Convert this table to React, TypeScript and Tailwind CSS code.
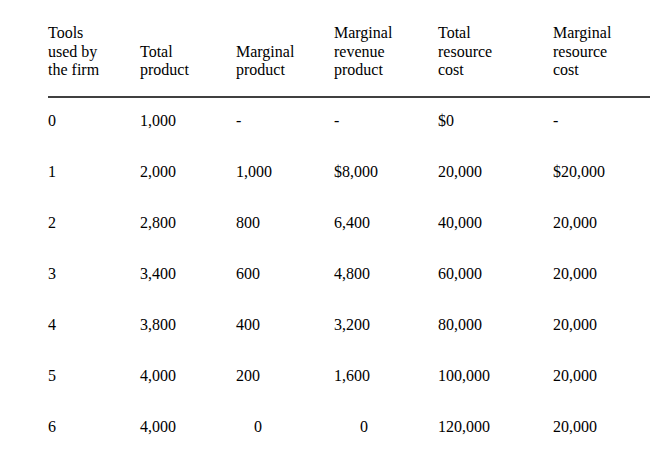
import React from "react";

const headers = [
  ["Tools", "used by", "the firm"],
  ["Total", "product"],
  ["Marginal", "product"],
  ["Marginal", "revenue", "product"],
  ["Total", "resource", "cost"],
  ["Marginal", "resource", "cost"],
];

const rows = [
  ["0", "1,000", "-", "-", "$0", "-"],
  ["1", "2,000", "1,000", "$8,000", "20,000", "$20,000"],
  ["2", "2,800", "800", "6,400", "40,000", "20,000"],
  ["3", "3,400", "600", "4,800", "60,000", "20,000"],
  ["4", "3,800", "400", "3,200", "80,000", "20,000"],
  ["5", "4,000", "200", "1,600", "100,000", "20,000"],
  ["6", "4,000", "0", "0", "120,000", "20,000"],
];

const grid = "grid grid-cols-[92px_96px_98px_104px_115px_1fr]";

export default function App() {
  return (
    <div className="w-[650px] h-[464px] bg-white text-black font-['Liberation_Serif',serif] text-[16px] overflow-hidden">
      <div className="pl-[48px] pt-[24px]">
        {/* Header */}
        <div className={`${grid} items-end leading-[18.5px] pb-[16px]`}>
          {headers.map((lines, i) => (
            <div key={i}>
              {lines.map((l) => (
                <div key={l}>{l}</div>
              ))}
            </div>
          ))}
        </div>
        <div className="h-[2px] bg-[#404040]" />

        {/* Rows */}
        <div className="flex flex-col -mt-[2.5px]">
          {rows.map((r, ri) => (
            <div key={ri} className={`${grid} h-[51px] items-center`}>
              {r.map((c, ci) => {
                const zeroPad =
                  ri === 6 && ci === 2 ? "pl-[18px]" : ri === 6 && ci === 3 ? "pl-[26px]" : "";
                return (
                  <div key={ci} className={zeroPad}>
                    {c}
                  </div>
                );
              })}
            </div>
          ))}
        </div>
      </div>
    </div>
  );
}
